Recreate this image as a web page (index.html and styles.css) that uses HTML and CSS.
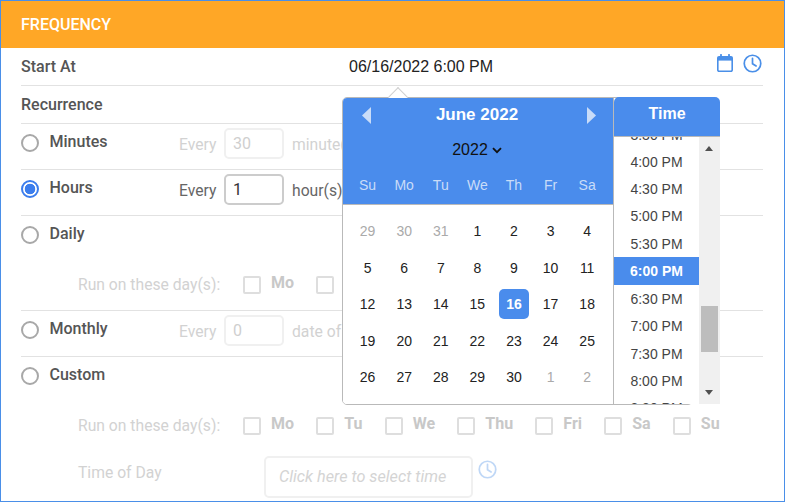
FILE: index.html
```html
<!DOCTYPE html>
<html lang="en">
<head>
<meta charset="utf-8">
<title>Frequency</title>
<link rel="stylesheet" href="styles.css">
</head>
<body>
<div class="frame">
  <header class="head">FREQUENCY</header>
  <div class="body">
    <div class="row row-start">
      <span class="label">Start At</span>
      <span class="date-value">06/16/2022 6:00 PM</span>
      <span class="icons">
        <svg class="ico-cal" viewBox="0 0 16 18"><path d="M.8 4a1.2 1.2 0 0 1 1.2-1.2h12a1.2 1.2 0 0 1 1.2 1.2v12a1.2 1.2 0 0 1-1.2 1.2h-12a1.2 1.2 0 0 1-1.2-1.2z" fill="none" stroke="#4a8fe8" stroke-width="1.6"/><path d="M.8 3h14.4v3.6h-14.4z" fill="#4a8fe8"/><path d="M4 .8v3M12 .8v3" stroke="#4a8fe8" stroke-width="1.8" stroke-linecap="round"/></svg>
        <svg class="ico-clock" viewBox="0 0 20 20"><circle cx="10" cy="10" r="8.7" fill="none" stroke="#4a8fe8" stroke-width="1.8"/><path d="M10 4.6v5.6l3.8 2.4" fill="none" stroke="#4a8fe8" stroke-width="1.8" stroke-linecap="round"/></svg>
      </span>
    </div>
    <div class="row row-rec"><span class="label">Recurrence</span></div>

    <div class="row row-opt off">
      <span class="radio"></span><span class="label opt">Minutes</span>
      <span class="every">Every</span><span class="num">30</span><span class="unit">minute(s)</span>
    </div>
    <div class="row row-opt">
      <span class="radio on"></span><span class="label opt">Hours</span>
      <span class="every">Every</span><span class="num">1</span><span class="unit">hour(s)</span>
    </div>
    <div class="row row-daily off">
      <div class="opt-line"><span class="radio"></span><span class="label opt">Daily</span></div>
      <div class="days">
        <span class="days-label">Run on these day(s):</span>
        <span class="cb"></span><b>Mo</b><span class="cb"></span><b>Tu</b><span class="cb"></span><b>We</b><span class="cb"></span><b>Thu</b><span class="cb"></span><b>Fri</b><span class="cb"></span><b>Sa</b><span class="cb"></span><b>Su</b>
      </div>
    </div>
    <div class="row row-opt off">
      <span class="radio"></span><span class="label opt">Monthly</span>
      <span class="every">Every</span><span class="num">0</span><span class="unit">date of month</span>
    </div>
    <div class="row-custom off">
      <div class="opt-line"><span class="radio"></span><span class="label opt">Custom</span></div>
      <div class="days days-custom">
        <span class="days-label">Run on these day(s):</span>
        <span class="cb"></span><b>Mo</b><span class="cb"></span><b>Tu</b><span class="cb"></span><b>We</b><span class="cb"></span><b>Thu</b><span class="cb"></span><b>Fri</b><span class="cb"></span><b>Sa</b><span class="cb"></span><b>Su</b>
      </div>
      <div class="tod">
        <span class="tod-label">Time of Day</span>
        <span class="tod-input">Click here to select time</span>
        <svg class="ico-clock" viewBox="0 0 20 20"><circle cx="10" cy="10" r="8.7" fill="none" stroke="#4a8fe8" stroke-width="1.8"/><path d="M10 4.6v5.6l3.8 2.4" fill="none" stroke="#4a8fe8" stroke-width="1.8" stroke-linecap="round"/></svg>
      </div>
    </div>
  </div>

  <div class="picker">
    <span class="caret"></span>
    <div class="cal">
      <div class="cal-head">
        <div class="month-line">
          <svg class="arrow" viewBox="0 0 9 17"><path d="M9 0v17L0 8.5z" fill="#c9dcf8"/></svg>
          <span class="month">June 2022</span>
          <svg class="arrow" viewBox="0 0 9 17"><path d="M0 0v17L9 8.5z" fill="#c9dcf8"/></svg>
        </div>
        <div class="year-line"><span>2022</span><svg class="chev" viewBox="0 0 10 7"><path d="M1 1.2l4 4 4-4" fill="none" stroke="#111" stroke-width="1.8"/></svg></div>
        <div class="week"><span>Su</span><span>Mo</span><span>Tu</span><span>We</span><span>Th</span><span>Fr</span><span>Sa</span></div>
      </div>
      <div class="grid">
        <span class="mute">29</span><span class="mute">30</span><span class="mute">31</span><span>1</span><span>2</span><span>3</span><span>4</span>
        <span>5</span><span>6</span><span>7</span><span>8</span><span>9</span><span>10</span><span>11</span>
        <span>12</span><span>13</span><span>14</span><span>15</span><span class="sel">16</span><span>17</span><span>18</span>
        <span>19</span><span>20</span><span>21</span><span>22</span><span>23</span><span>24</span><span>25</span>
        <span>26</span><span>27</span><span>28</span><span>29</span><span>30</span><span class="mute">1</span><span class="mute">2</span>
      </div>
    </div>
    <div class="time">
      <div class="time-head">Time</div>
      <div class="time-body">
        <ul class="list">
          <li>3:30 PM</li><li>4:00 PM</li><li>4:30 PM</li><li>5:00 PM</li><li>5:30 PM</li><li class="cur">6:00 PM</li><li>6:30 PM</li><li>7:00 PM</li><li>7:30 PM</li><li>8:00 PM</li><li>8:30 PM</li>
        </ul>
        <div class="scroll">
          <span class="up"></span>
          <span class="thumb"></span>
          <span class="down"></span>
        </div>
      </div>
    </div>
  </div>
</div>
</body>
</html>
```
FILE: styles.css
```css
* { box-sizing: border-box; }
html, body { margin: 0; padding: 0; background: #fff; }
body { font-family: Roboto, "Liberation Sans", sans-serif; }
.frame { position: relative; width: 785px; height: 502px; border: 1px solid #4a8fe8; overflow: hidden; }
.head { height: 47px; background: #ffa726; color: #fff; font: 500 16px/47px Roboto, sans-serif; padding-left: 20px; }
.body { padding: 0 21px 0 20px; }
.row { border-bottom: 1px solid #e2e2e2; display: flex; }
.label { font: 500 16px/20px Roboto, sans-serif; color: #555; }
.row-start { height: 38px; align-items: flex-start; padding-top: 9px; }
.row-start .label { width: 328px; margin-top: 0; }
.date-value { font: 16px/20px "Liberation Sans", sans-serif; color: #222; }
.icons { margin-left: auto; display: flex; gap: 10px; margin-top: -3px; margin-right: 1px; }
.ico-cal { width: 16px; height: 18px; display: block; }
.ico-clock { width: 19px; height: 19px; display: block; }
.row-rec { height: 38px; padding-top: 9px; }
.row-opt { height: 46px; padding-top: 4px; align-items: flex-start; }
.radio { width: 18px; height: 18px; border: 2px solid #a8a8a8; border-radius: 50%; margin-top: 6px; flex: none; background: #fff; }
.radio.on { border-color: #3b7ded; background: radial-gradient(circle, #3b7ded 0 5px, #fff 5.6px); }
.opt { margin-left: 10.5px; margin-top: 4px; width: 129.5px; }
.every { font: 15.7px/20px Roboto, sans-serif; color: #666; margin-top: 7px; width: 45px; }
.num { width: 60px; height: 31px; border: 2px solid #ccc; border-radius: 5px; font: 16px/27px Roboto, sans-serif; padding-left: 7px; color: #333; }
.unit { font: 15.7px/20px Roboto, sans-serif; color: #666; margin: 7px 0 0 8px; white-space: nowrap; }
.off .every, .off .unit, .off .num, .off .days-label, .off .tod-label { color: #d2d2d2; }
.off .num { border-color: #f0f0f0; color: #cfcfcf; }
.row-daily { display: block; height: 95px; padding-top: 4px; }
.row-custom { display: block; padding-top: 4px; }
.opt-line { display: flex; align-items: flex-start; }
.days { display: flex; align-items: flex-start; margin-top: 30px; padding-left: 57px; }
.days-label { font: 15.7px/20px Roboto, sans-serif; width: 165px; margin-top: 1px; white-space: nowrap; }
.cb { width: 18px; height: 18px; border: 2px solid #dedede; border-radius: 2px; margin-right: 10px; margin-top: 2px; flex: none; }
.days b { font: 700 16px/20px Roboto, sans-serif; color: #c8c8c8; margin: -1px 22.2px 0 0; }
.row-daily .days b:last-child { visibility: hidden; }
.days-custom { margin-top: 30px; }
.tod { display: flex; align-items: flex-start; padding-left: 57px; margin-top: 20px; }
.tod-label { font: 15.7px/20px Roboto, sans-serif; width: 186px; margin-top: 7px; }
.tod-input { width: 209px; height: 42px; border: 2px solid #f0f0f0; border-radius: 5px; font: italic 16.2px/37px Roboto, sans-serif; color: #d4d4d4; padding-left: 13px; flex: none; white-space: nowrap; }
.tod .ico-clock { margin: 4px 0 0 5px; opacity: .35; }

.picker { position: absolute; left: 341px; top: 96px; width: 351px; height: 308px; border: 1px solid #b9b9b9; border-radius: 5px; background: #fff; display: flex; font-family: "Liberation Sans", sans-serif; }
.caret { position: absolute; left: 48px; top: -8px; width: 14px; height: 14px; background: #fff; border: 1px solid #cfcfcf; border-right: 0; border-bottom: 0; transform: rotate(45deg); }
.cal { position: relative; width: 271px; height: 306px; flex: none; border-right: 1px solid #b9b9b9; background: #fff; border-radius: 4px 0 0 4px; }
.cal-head { background: #4a8cec; height: 107px; border-bottom: 1px solid #b9b9b9; border-radius: 4px 0 0 0; }
.month-line { display: flex; justify-content: space-between; align-items: center; height: 34px; padding: 0 17px 0 19px; }
.arrow { width: 9px; height: 17px; display: block; }
.month { font: 700 17px/20px "Liberation Sans", sans-serif; color: #fff; margin-right: 4px; }
.year-line { display: flex; justify-content: center; align-items: center; gap: 4px; height: 36px; padding-right: 2px; font: 16px/20px "Liberation Sans", sans-serif; color: #111; }
.chev { width: 10px; height: 7px; }
.week { display: grid; grid-template-columns: repeat(7, 36.6px); padding-left: 6.3px; font: 14px/20px "Liberation Sans", sans-serif; color: #c9dcf8; text-align: center; margin-top: 7px; }
.grid { display: grid; grid-template-columns: repeat(7, 36.6px); grid-auto-rows: 36.5px; padding: 8px 0 0 6.3px; font: 14px/20px "Liberation Sans", sans-serif; color: #222; }
.grid span { display: flex; align-items: center; justify-content: center; }
.grid .mute { color: #aaa; }
.grid .sel { width: 30px; height: 30px; margin: 3px 0 0 3.4px; background: #4a8cec; color: #fff; font-weight: 700; border-radius: 5px; }
.time { position: absolute; left: 271px; top: -1px; width: 106px; height: 307px; }
.time-head { height: 40px; background: #4a8cec; border-bottom: 1px solid #b9b9b9; border-radius: 5px 5px 0 0; color: #fff; font: 700 16px/33px "Liberation Sans", sans-serif; text-align: center; }
.time-body { position: relative; height: 267px; display: flex; overflow: hidden; background: #fff; }
.list { list-style: none; margin: -16.5px 0 0; padding: 0; width: 85px; flex: none; }
.list li { height: 27.3px; font: 14px/29px "Liberation Sans", sans-serif; color: #444; text-align: center; }
.list .cur { height: 28px; background: #4a8cec; color: #fff; font-weight: 700; }
.scroll { position: relative; width: 21px; background: #f0f0f0; flex: none; height: 267px; }
.up, .down { position: absolute; left: 6px; width: 0; height: 0; border-left: 4px solid transparent; border-right: 4px solid transparent; }
.up { top: 9px; border-bottom: 5px solid #505050; }
.down { bottom: 9px; border-top: 5px solid #505050; }
.thumb { position: absolute; left: 2px; top: 169px; width: 17px; height: 46px; background: #bdbdbd; }
```
